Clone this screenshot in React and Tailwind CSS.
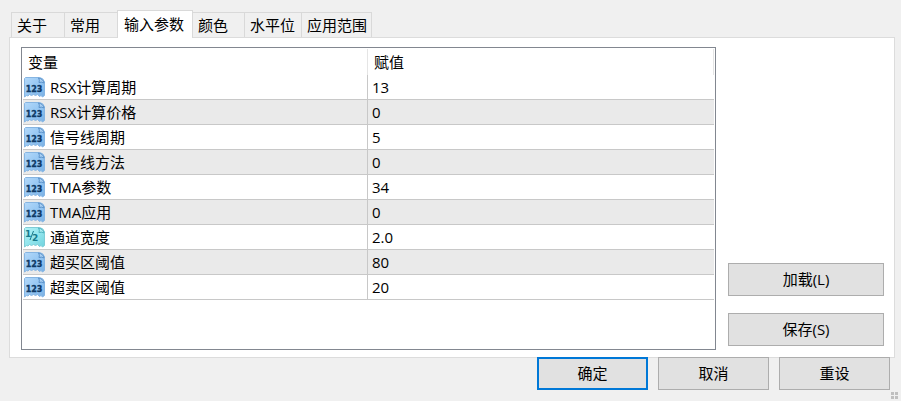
import React, { useState } from 'react';

const tabs = [
  { id: 'about', label: '关于', width: 'w-[53px] border-l' },
  { id: 'common', label: '常用', width: 'w-[53px] border-l' },
  { id: 'inputs', label: '输入参数', width: 'w-[76px]' },
  { id: 'colors', label: '颜色', width: 'w-[51px]' },
  { id: 'levels', label: '水平位', width: 'w-[57px] border-l' },
  { id: 'scope', label: '应用范围', width: 'w-[71px] border-x' },
];

const params = [
  { name: 'RSX计算周期', value: '13', type: 'int' },
  { name: 'RSX计算价格', value: '0', type: 'int' },
  { name: '信号线周期', value: '5', type: 'int' },
  { name: '信号线方法', value: '0', type: 'int' },
  { name: 'TMA参数', value: '34', type: 'int' },
  { name: 'TMA应用', value: '0', type: 'int' },
  { name: '通道宽度', value: '2.0', type: 'double' },
  { name: '超买区阈值', value: '80', type: 'int' },
  { name: '超卖区阈值', value: '20', type: 'int' },
];

const TypeIcon = ({ type }) => {
  const isInt = type === 'int';
  return (
    <svg className="block h-[21px] w-[21px] shrink-0" viewBox="0 0 21 21" aria-hidden="true">
      <defs>
        <linearGradient id={`paper-${type}`} x1="0" y1="0" x2="1" y2="1">
          <stop offset="0" stopColor={isInt ? '#b4d9fa' : '#b4f2f6'} />
          <stop offset="0.55" stopColor={isInt ? '#93c5f2' : '#8fe4ec'} />
          <stop offset="1" stopColor={isInt ? '#7ab0e4' : '#70d2de'} />
        </linearGradient>
      </defs>
      {/* Torn sheet with a folded corner */}
      <path
        d="M1.5 .5H15.5Q19.5 1 20.5 5V18.5L18.5 20L17 18.5L15.5 19.5L13.5 17.5L11.5 18.5L9.5 17.5L7.5 18.5L5.5 17.5L4 19L2.5 18.5L.5 20V1.5Z"
        fill={`url(#paper-${type})`}
        stroke={isInt ? '#86b5e2' : '#7fccd6'}
      />
      <path
        d="M14.5 1Q16 3 15 5.5Q18 4.5 20 6Q19.5 2 14.5 1Z"
        fill={isInt ? '#a9d0f4' : '#a8ebf1'}
        stroke={isInt ? '#5d93ca' : '#4fb3c0'}
      />
      {isInt ? (
        <text x="10" y="15" textAnchor="middle" fontFamily="DejaVu Sans" fontSize="8" fontWeight="700" fill="#0f3a66" stroke="#0f3a66" strokeWidth="0.3">
          123
        </text>
      ) : (
        <g fill="#177a8c" fontFamily="DejaVu Sans" fontSize="9" fontWeight="700">
          <text x="1" y="10">1</text>
          <path d="M6 13L9.5 4" stroke="#177a8c" />
          <text x="8" y="14">2</text>
        </g>
      )}
    </svg>
  );
};

const DialogButton = ({ children, primary, className }) => (
  <button
    type="button"
    className={`h-[33px] bg-[#e1e1e1] pb-0.5 text-center ${primary ? 'border-2 border-[#0078d7]' : 'border border-[#adadad]'} ${className}`}
  >
    {children}
  </button>
);

const App = () => {
  const [active, setActive] = useState('inputs');

  return (
    <div className="relative flex min-h-screen flex-col bg-[#f0f0f0] pt-2.5 pr-1.5 pb-[11px] pl-[9px] font-['Open_Sans','Noto_Sans_CJK_SC',sans-serif] text-[15px] leading-5 text-black">
      <div role="tablist" className="relative flex items-end pl-0.5">
        {tabs.map((tab) => (
          <button
            key={tab.id}
            type="button"
            role="tab"
            aria-selected={active === tab.id}
            onClick={() => setActive(tab.id)}
            className={`border-t border-[#d9d9d9] text-left whitespace-nowrap ${tab.width} ${
              active === tab.id ? '-mb-px h-7 border-x bg-white pl-1.5 pb-0.5' : 'h-[25px] bg-[#f0f0f0] pl-[5px]'
            }`}
          >
            {tab.label}
          </button>
        ))}
      </div>

      <div className="flex flex-1 gap-3 border border-[#dcdcdc] bg-white pt-[9px] pr-2.5 pb-[7px] pl-[11px]">
        <div className="flex-1 border border-[#828790] p-px">
          <table className="w-full table-fixed border-separate border-spacing-0 text-left">
            <thead>
              <tr className="h-[26px]">
                <th className="w-[345px] border-r border-[#e5e5e5] p-0 pl-[5px] font-normal">变量</th>
                <th className="border-r border-[#e5e5e5] p-0 pl-1.5 font-normal">赋值</th>
              </tr>
            </thead>
            <tbody>
              {params.map((param) => (
                <tr key={param.name} className="h-[25px] even:bg-[#eaeaea]">
                  <td className="border-r border-b border-[#c8c8c8] p-0 pl-px">
                    <div className="flex items-center gap-[5px]">
                      <TypeIcon type={param.type} />
                      {param.name}
                    </div>
                  </td>
                  <td className="border-b border-[#c8c8c8] p-0 pl-1">{param.value}</td>
                </tr>
              ))}
            </tbody>
          </table>
        </div>

        <div className="flex w-[156px] flex-col justify-end gap-[17px] pb-1">
          <DialogButton>加载(L)</DialogButton>
          <DialogButton>保存(S)</DialogButton>
        </div>
      </div>

      <div className="relative -mt-px flex justify-end gap-2.5 pr-[5px]">
        <DialogButton primary className="w-[111px]">确定</DialogButton>
        <DialogButton className="w-[111px]">取消</DialogButton>
        <DialogButton className="w-[111px]">重设</DialogButton>
      </div>

      {/* Resize grip */}
      <div className="absolute right-[3px] bottom-0.5 grid grid-cols-2 gap-px">
        <span className="h-[3px] w-[3px] bg-[#bfbfbf]" />
        <span className="h-[3px] w-[3px] bg-[#bfbfbf]" />
        <span className="h-[3px] w-[3px] bg-[#bfbfbf]" />
        <span className="h-[3px] w-[3px] bg-[#bfbfbf]" />
      </div>
    </div>
  );
};

export default App;
